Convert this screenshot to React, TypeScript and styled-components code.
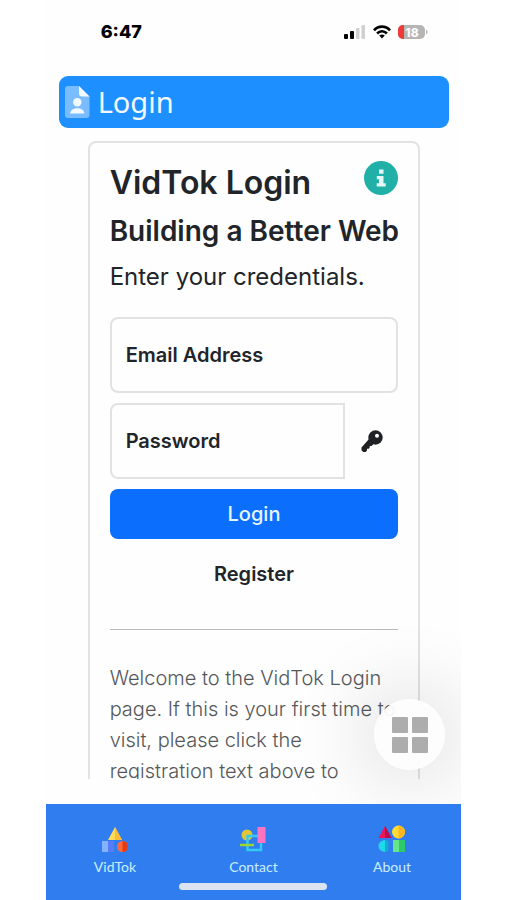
import React from "react";
import styled, { createGlobalStyle } from "styled-components";

const GlobalStyle = createGlobalStyle`
  *, *::before, *::after { box-sizing: border-box; }
  body { margin: 0; background: #fff; color: #212529; font-family: Inter, "Liberation Sans", sans-serif; }
  button, input { font: inherit; }
`;

const Screen = styled.div`
  position: relative;
  display: flex;
  flex-direction: column;
  width: 82%;
  height: 100vh;
  margin: 0 auto;
  overflow: hidden;
  background: #fefefe;
`;

const StatusBar = styled.div`
  display: flex;
  flex: none;
  justify-content: space-between;
  align-items: center;
  height: 64px;
  padding: 0 33px 0 55px;
  color: #000;
`;

const Time = styled.time`
  font-size: 18px;
  line-height: 24px;
  font-weight: 800;
`;

const StatusIcons = styled.div`
  display: flex;
  align-items: center;
  gap: 7px;
`;

const Battery = styled.svg`
  font-family: Inter, sans-serif;
  font-size: 12px;
  font-weight: 800;
`;

const TitleBar = styled.header`
  display: flex;
  flex: none;
  align-items: center;
  gap: 8px;
  height: 52px;
  margin: 12px 12px 0 13px;
  padding: 0 6px;
  border-radius: 9px;
  background: #1e8fff;
  color: #f2faff;
`;

const BarTitle = styled.span`
  font-family: "Noto Sans", sans-serif;
  font-size: 29px;
  line-height: 40px;
`;

const Content = styled.main`
  flex: 1;
  min-height: 0;
  margin: 13px 41px 25px 42px;
  overflow: hidden;
`;

const Card = styled.section`
  min-height: 100%;
  padding: 18px 20px 48px;
  border: 2px solid #e1e2e3;
  border-radius: 8px;
`;

const CardTop = styled.div`
  display: flex;
  justify-content: space-between;
  align-items: flex-start;
`;

const Heading = styled.h1`
  margin: 2px 0 0;
  font-size: 32px;
  line-height: 40px;
  font-weight: 600;
`;

const Subheading = styled.h2`
  margin: 11px 0 0;
  font-size: 28px;
  line-height: 34px;
  font-weight: 600;
  white-space: nowrap;
`;

const Lead = styled.p`
  margin: 13px 0 24px;
  font-size: 24px;
  line-height: 32px;
  white-space: nowrap;
`;

const IconButton = styled.button`
  display: flex;
  flex: none;
  justify-content: center;
  align-items: center;
  padding: 0;
  border: 0;
  background: none;
  color: inherit;
  cursor: pointer;
`;

const KeyButton = styled(IconButton)`
  width: 53px;
`;

const Form = styled.form`
  display: flex;
  flex-direction: column;
  gap: 10px;
`;

const FieldRow = styled.div`
  display: flex;
`;

const Field = styled.div`
  display: grid;
  flex: 1;
  min-width: 0;
  align-items: center;
`;

const Label = styled.label`
  grid-area: 1 / 1;
  padding-left: 16px;
  font-size: 20px;
  line-height: 24px;
  font-weight: 600;
  pointer-events: none;
`;

const Input = styled.input<{ $joined?: boolean }>`
  grid-area: 1 / 1;
  width: 100%;
  height: 76px;
  padding: 24px 16px 0;
  border: 2px solid #e1e2e3;
  border-radius: ${(p) => (p.$joined ? "8px 0 0 8px" : "8px")};
  background: transparent;
  font-size: 20px;
`;

const TextButton = styled.button<{ $primary?: boolean }>`
  height: 50px;
  padding: 0;
  border: 0;
  border-radius: 8px;
  background: ${(p) => (p.$primary ? "#0c6efd" : "transparent")};
  color: ${(p) => (p.$primary ? "#e6f6ff" : "#212529")};
  font-size: 20px;
  line-height: 24px;
  font-weight: ${(p) => (p.$primary ? 500 : 600)};
  cursor: pointer;
`;

const Divider = styled.hr`
  margin: 30px 0 33px;
  border: 0;
  border-top: 1px solid #b9babb;
`;

const Welcome = styled.p`
  margin: 0;
  font-size: 20px;
  line-height: 31px;
  font-weight: 300;
  color: #55585a;
`;

const Fab = styled.button`
  position: absolute;
  right: 16px;
  bottom: 130px;
  display: flex;
  justify-content: center;
  align-items: center;
  width: 71px;
  height: 71px;
  padding: 0;
  border: 0;
  border-radius: 50%;
  background: rgba(253, 253, 253, 0.95);
  box-shadow: 0 0 80px 10px rgba(0, 0, 0, 0.14);
  cursor: pointer;
`;

const BottomNav = styled.nav`
  position: relative;
  display: flex;
  flex: none;
  height: 96px;
  background: #307df0;
`;

const NavLink = styled.a`
  display: flex;
  flex: 1;
  flex-direction: column;
  align-items: center;
  gap: 4px;
  padding-top: 20px;
  color: #c9efff;
  font-family: Lato, sans-serif;
  font-size: 14px;
  line-height: 18px;
  text-decoration: none;
`;

const HomeIndicator = styled.div`
  position: absolute;
  left: 50%;
  bottom: 10px;
  width: 148px;
  height: 7px;
  margin-left: -74px;
  border-radius: 4px;
  background: #dce4f1;
`;

const SignalIcon = () => (
  <svg width="22" height="14" viewBox="0 0 22 14" aria-hidden="true">
    <rect x="0" y="9" width="4" height="5" rx="1" />
    <rect x="6" y="6" width="4" height="8" rx="1" />
    <rect x="12" y="3" width="3.5" height="11" rx="1" fill="#d0d0d0" />
    <rect x="17.500" y="0" width="3.5" height="14" rx="1" fill="#d0d0d0" />
  </svg>
);

const WifiIcon = () => (
  <svg width="18" height="14" viewBox="0 0 18 14" aria-hidden="true">
    <g fill="none" stroke="#000" strokeWidth="2.6">
      <path d="M1 5.3C5.5.4 12.5.4 17 5.3" />
      <path d="M4.1 8.5c2.8-3 7-3 9.8 0" />
    </g>
    <path d="M6.2 10.6c1.7-1.5 3.9-1.5 5.6 0L9 13.6z" />
  </svg>
);

const BatteryIcon = () => (
  <Battery width="30" height="16" viewBox="0 0 30 16" role="img" aria-label="Battery 18%">
    <rect x="0" y="1" width="27" height="14" rx="5" fill="#b5b5b5" />
    <path d="M6 1H5a5 5 0 0 0-5 5v4a5 5 0 0 0 5 5h1z" fill="#ee3b35" />
    <path d="M28 5.5c2 .7 2 4.3 0 5z" fill="#b5b5b5" />
    <text x="14" y="12.5" textAnchor="middle" fill="#fff">18</text>
  </Battery>
);

const ProfileFileIcon = () => (
  <svg width="25" height="32" viewBox="0 0 25 32" aria-hidden="true">
    <path d="M3 0h11l10.500 10.500V29a3 3 0 0 1-3 3H3a3 3 0 0 1-3-3V3a3 3 0 0 1 3-3z" fill="#79bcff" />
    <path d="M14 0l10.500 10.500H17a3 3 0 0 1-3-3z" fill="#f3faff" />
    <circle cx="12.300" cy="16.300" r="4.200" fill="#f3faff" />
    <path d="M5.300 27.500c0-7 14-7 14 0z" fill="#f3faff" />
  </svg>
);

const InfoIcon = () => (
  <svg width="34" height="34" viewBox="0 0 34 34" aria-hidden="true">
    <circle cx="17" cy="17" r="17" fill="#20b0a8" />
    <path d="M15 8.500h4.500v4.200H15zM12.800 15h6.700v7.300h2.200v3.200h-9v-3.200H15v-4.100h-2.200z" fill="#e4f7f6" />
  </svg>
);

const KeyIcon = () => (
  <svg width="22" height="22" viewBox="0 0 22 22" aria-hidden="true">
    <circle cx="14.500" cy="7.500" r="7.200" fill="#202124" />
    <path
      d="M8 9L.500 17.500v2.800L2.300 22h2.400l1.300-1.600v-1.600h1.700l1-1.200v-1.500h1.800l3-2.800z"
      fill="#202124"
    />
    <circle cx="16" cy="5.800" r="2" fill="#fff" />
  </svg>
);

const GridIcon = () => (
  <svg width="36" height="36" viewBox="0 0 36 36" fill="#adadad" aria-hidden="true">
    <rect width="16" height="16" rx="1" />
    <rect x="20" width="16" height="16" rx="1" />
    <rect y="20" width="16" height="16" rx="1" />
    <rect x="20" y="20" width="16" height="16" rx="1" />
  </svg>
);

const ShapesIcon = () => (
  <svg width="28" height="30" viewBox="0 0 28 30" aria-hidden="true">
    <path d="M14 3l7 13H7z" fill="#ffdb57" />
    <path d="M14 3l7 13h-7z" fill="#fbbd35" />
    <path d="M1 17h6v11H1z" fill="#84b2ff" />
    <path d="M7 17h6v11H7z" fill="#587bfa" />
    <circle cx="21.500" cy="22.500" r="5.500" fill="#ff6a3c" />
    <path d="M21.500 17a5.500 5.500 0 0 1 0 11z" fill="#e63a13" />
  </svg>
);

const ConnectedIcon = () => (
  <svg width="28" height="30" viewBox="0 0 28 30" aria-hidden="true">
    <circle cx="8" cy="11" r="5.500" fill="#e1c631" />
    <path d="M19 12H8.500v14H22v-7" fill="none" stroke="#35c7f5" strokeWidth="2.500" />
    <path d="M1 21h14" stroke="#9bd72e" strokeWidth="2.500" />
    <rect x="18.500" y="3" width="8" height="16" fill="#ff73c3" />
  </svg>
);

const CategoriesIcon = () => (
  <svg width="28" height="30" viewBox="0 0 28 30" aria-hidden="true">
    <path d="M7 2l6.500 12H.500z" fill="#ed1757" />
    <path d="M7 2l6.500 12H7z" fill="#b90d4c" />
    <circle cx="20.500" cy="8" r="6.500" fill="#ffdc33" />
    <path d="M20.500 1.500a6.500 6.500 0 0 1 0 13z" fill="#ffb51f" />
    <path d="M7 16v12C3 27.500.500 25 .500 22S3 16.500 7 16z" fill="#20d8e9" />
    <path d="M7 16l3.500 1v10L7 28z" fill="#11abd6" />
    <path d="M15 16h6v12h-6z" fill="#65e58a" />
    <path d="M21 16h6v12h-6z" fill="#2fc96b" />
  </svg>
);

const navItems = [
  { label: "VidTok", Icon: ShapesIcon },
  { label: "Contact", Icon: ConnectedIcon },
  { label: "About", Icon: CategoriesIcon },
];

export default function App() {
  return (
    <>
      <GlobalStyle />
      <Screen>
        <StatusBar>
          <Time>6:47</Time>
          <StatusIcons>
            <SignalIcon />
            <WifiIcon />
            <BatteryIcon />
          </StatusIcons>
        </StatusBar>
        <TitleBar>
          <ProfileFileIcon />
          <BarTitle>Login</BarTitle>
        </TitleBar>
        <Content>
          <Card>
            <CardTop>
              <Heading>VidTok Login</Heading>
              <IconButton type="button" aria-label="Information">
                <InfoIcon />
              </IconButton>
            </CardTop>
            <Subheading>Building a Better Web</Subheading>
            <Lead>Enter your credentials.</Lead>
            <Form onSubmit={(e) => e.preventDefault()}>
              <Field>
                <Label htmlFor="email">Email Address</Label>
                <Input id="email" type="email" />
              </Field>
              <FieldRow>
                <Field>
                  <Label htmlFor="password">Password</Label>
                  <Input id="password" type="password" $joined />
                </Field>
                <KeyButton type="button" aria-label="Show password">
                  <KeyIcon />
                </KeyButton>
              </FieldRow>
              <TextButton type="submit" $primary>Login</TextButton>
              <TextButton type="button">Register</TextButton>
            </Form>
            <Divider />
            <Welcome>
              Welcome to the VidTok Login page. If this is your first time to visit, please click the
              registration text above to
            </Welcome>
          </Card>
        </Content>
        <Fab type="button" aria-label="Open menu">
          <GridIcon />
        </Fab>
        <BottomNav>
          {navItems.map(({ label, Icon }) => (
            <NavLink href="#" key={label}>
              <Icon />
              {label}
            </NavLink>
          ))}
          <HomeIndicator />
        </BottomNav>
      </Screen>
    </>
  );
}
